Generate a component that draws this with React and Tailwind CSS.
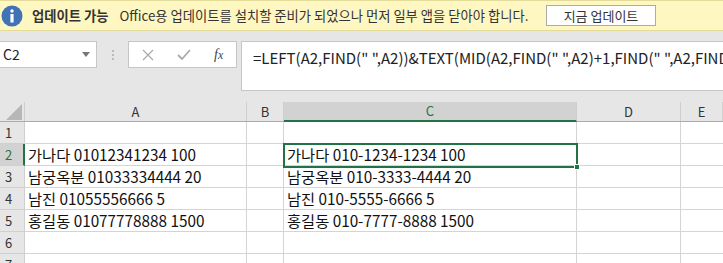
const cols = [
  { name: "A", w: "w-[222px]" },
  { name: "B", w: "w-[37px]" },
  { name: "C", w: "w-[293px]" },
  { name: "D", w: "w-[104px]" },
  { name: "E", w: "flex-1" },
];

const rows = [
  { n: 1, a: "", c: "" },
  { n: 2, a: "가나다 01012341234 100", c: "가나다 010-1234-1234 100" },
  { n: 3, a: "남궁옥분 01033334444 20", c: "남궁옥분 010-3333-4444 20" },
  { n: 4, a: "남진 01055556666 5", c: "남진 010-5555-6666 5" },
  { n: 5, a: "홍길동 01077778888 1500", c: "홍길동 010-7777-8888 1500" },
  { n: 6, a: "", c: "" },
  { n: 7, a: "", c: "" },
];

const font = { fontFamily: '"Noto Sans CJK KR", "Noto Sans", sans-serif' };

function Banner() {
  return (
    <div className="h-[31px] border-t border-[#cfcfcf] bg-[#fff7c1] border-b border-[#e3db9a] flex items-center">
      <svg width="22" height="22" viewBox="0 0 22 22" className="ml-[1px]">
        <circle cx="11" cy="11" r="10.5" fill="#3f73b6" />
        <circle cx="11" cy="6" r="1.7" fill="#fff" />
        <rect x="9.4" y="9" width="3.2" height="8.5" fill="#fff" />
      </svg>
      <span className="ml-[9px] text-[13.3px] font-bold text-[#333]">업데이트 가능</span>
      <span className="ml-[11px] text-[13.3px] text-[#333]">
        Office용 업데이트를 설치할 준비가 되었으나 먼저 일부 앱을 닫아야 합니다.
      </span>
      <button className="ml-auto mr-[67px] w-[110px] h-[21px] bg-white border border-[#ababab] text-[13px] text-[#333] leading-none">
        지금 업데이트
      </button>
    </div>
  );
}

function FormulaBar() {
  return (
    <div className="h-[71px] flex items-start pt-[10px]">
      <div className="w-[97px] h-[27px] bg-white border border-[#c6c6c6] border-l-0 flex items-center pl-[3px] pr-[6px]">
        <span className="text-[14px] text-[#222]">C2</span>
        <svg width="8" height="5" viewBox="0 0 8 5" className="ml-auto">
          <path d="M0 0 L8 0 L4 5 Z" fill="#777" />
        </svg>
      </div>
      <div className="w-[31px] h-[27px] flex flex-col items-center justify-center gap-[2px]">
        <span className="w-[2px] h-[2px] bg-[#b9b9b9]" />
        <span className="w-[2px] h-[2px] bg-[#b9b9b9]" />
        <span className="w-[2px] h-[2px] bg-[#b9b9b9]" />
      </div>
      <div className="w-[109px] h-[27px] bg-white border border-[#c6c6c6] flex items-center">
        <svg width="12" height="12" viewBox="0 0 12 12" className="ml-[13px]">
          <path d="M1 1 L11 11 M11 1 L1 11" stroke="#aaa" strokeWidth="1.3" />
        </svg>
        <svg width="14" height="12" viewBox="0 0 14 12" className="ml-[23px]">
          <path d="M1 6 L5 10 L13 1" stroke="#aaa" strokeWidth="1.8" fill="none" />
        </svg>
        <span className="ml-[23px] text-[14px] italic text-[#444]" style={{ fontFamily: '"Liberation Serif", serif' }}>
          f<span className="text-[12px]">x</span>
        </span>
      </div>
      <div className="ml-[4px] flex-1 h-[50px] bg-white border border-[#c6c6c6] border-r-0 pl-[11px] pt-[3px] overflow-hidden whitespace-nowrap">
        <span className="text-[15px] text-[#222]">
          =LEFT(A2,FIND(" ",A2))&amp;TEXT(MID(A2,FIND(" ",A2)+1,FIND(" ",A2,FIND(" ",A2)+1)-FIND(" ",A2)-1),"000-0000-0000")
        </span>
      </div>
    </div>
  );
}

function Sheet() {
  return (
    <div className="relative bg-white">
      <div className="flex h-[20px] bg-[#e6e6e6] border-b border-[#ababab]">
        <div className="w-[25px] relative border-r border-[#cfcfcf]">
          <svg width="16" height="16" viewBox="0 0 16 16" className="absolute right-[2px] bottom-[1px]">
            <path d="M16 0 L16 16 L0 16 Z" fill="#b7b7b7" />
          </svg>
        </div>
        {cols.map((c) => (
          <div
            key={c.name}
            className={
              c.name === "C"
                ? `${c.w} flex items-center justify-center text-[13px] text-[#217346] bg-[#d2d2d2] border-r border-[#cfcfcf] border-b-2 border-b-[#217346] -mb-[1px]`
                : `${c.w} flex items-center justify-center text-[13px] text-[#333] border-r border-[#cfcfcf]`
            }
          >
            {c.name}
          </div>
        ))}
      </div>
      {rows.map((r) => (
        <div key={r.n} className="flex h-[22px]">
          <div
            className={
              r.n === 2
                ? "w-[25px] bg-[#d2d2d2] text-[#217346] text-[13px] pl-[5px] flex items-center border-b border-[#cfcfcf] border-r-2 border-r-[#217346]"
                : "w-[25px] bg-[#e6e6e6] text-[#333] text-[13px] pl-[5px] flex items-center border-b border-r border-[#cfcfcf]"
            }
          >
            {r.n}
          </div>
          <div className="w-[222px] border-r border-b border-[#d4d4d4] pl-[3px] flex items-center text-[15.3px] text-[#111] whitespace-nowrap">
            {r.a}
          </div>
          <div className="w-[37px] border-r border-b border-[#d4d4d4]" />
          <div className="w-[293px] border-r border-b border-[#d4d4d4] pl-[3px] flex items-center text-[15.3px] text-[#111] whitespace-nowrap">
            {r.c}
          </div>
          <div className="w-[104px] border-r border-b border-[#d4d4d4]" />
          <div className="flex-1 border-b border-[#d4d4d4]" />
        </div>
      ))}
      <div className="absolute left-[283px] top-[41px] w-[295px] h-[25px] border-2 border-[#217346]">
        <div className="absolute -right-[4px] -bottom-[4px] w-[6px] h-[6px] bg-[#217346] border border-white" />
      </div>
    </div>
  );
}

export default function App() {
  return (
    <div className="w-[723px] h-[263px] overflow-hidden bg-[#e6e6e6]" style={font}>
      <Banner />
      <FormulaBar />
      <Sheet />
    </div>
  );
}
